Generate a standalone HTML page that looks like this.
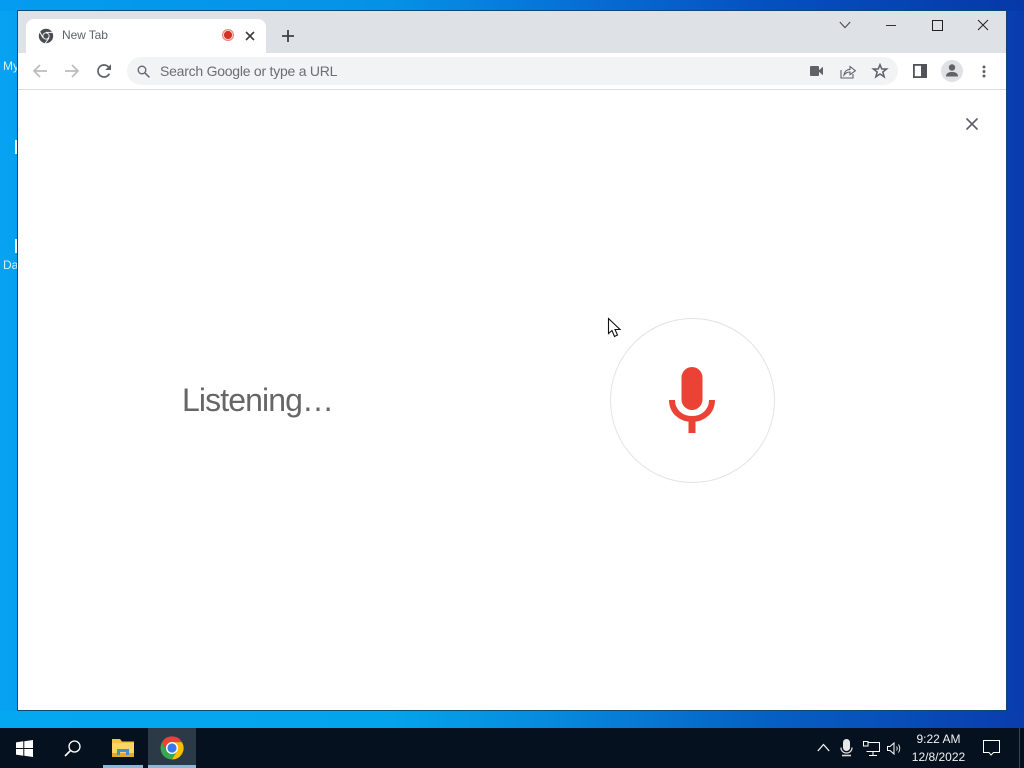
<!DOCTYPE html>
<html><head><meta charset="utf-8"><style>
html,body{margin:0;padding:0;width:1024px;height:768px;overflow:hidden}
body{position:relative;font-family:"Liberation Sans",sans-serif;background:linear-gradient(90deg,#07a2f2 0%,#06a0f0 2%,#0a40b2 98%,#083cae 100%)}
.a{position:absolute}
svg{position:absolute;overflow:visible}
</style></head><body>
<div class="a" style="left:0;top:0;width:1024px;height:11px;background:linear-gradient(90deg,#049cf0 0%,#0592e6 38%,#0670d6 56%,#0550c0 75%,#0638a8 100%)"></div>
<div class="a" style="left:0;top:711px;width:1024px;height:17px;background:linear-gradient(90deg,#04a8f0 0%,#04a4ec 38%,#0688dc 55%,#0560c4 75%,#0a3cae 100%)"></div>
<div class="a" style="left:3px;top:59px;font-size:12px;color:#d8f0ff">My</div>
<div class="a" style="left:3px;top:258px;font-size:12px;color:#d8f0ff">Da</div>
<div class="a" style="left:15px;top:140px;width:3px;height:14px;background:#e8f4ff"></div>
<div class="a" style="left:15px;top:239px;width:3px;height:14px;background:#e8f4ff"></div>

<div class="a" style="left:17px;top:10px;width:990px;height:701px;background:#fff;box-sizing:border-box;border:1px solid #0b4a78;border-right-color:#10417f"></div>
<div class="a" style="left:18px;top:11px;width:988px;height:42px;background:#dee1e6"></div>
<div class="a" style="left:26px;top:19px;width:240px;height:34px;background:#fff;border-radius:8px 8px 0 0"></div>
<div class="a" style="left:18px;top:89px;width:988px;height:1px;background:#dadce0"></div>

<!-- Chrome tab icon -->
<svg style="left:38px;top:28px" width="16" height="16" viewBox="0 0 16 16"><circle cx="8" cy="8" r="7.2" fill="#4a4d51"/><circle cx="8" cy="8" r="3.6" fill="#fff"/><circle cx="8" cy="8" r="2.7" fill="#4a4d51"/><path d="M8 4.4H15M5 9.8L1.6 3.6M10.9 10L7.2 15.4" stroke="#fff" stroke-width="1"/></svg>
<div class="a" style="left:62px;top:28px;font-size:12px;line-height:15px;color:#5f6368;letter-spacing:-.1px">New Tab</div>
<svg style="left:222px;top:29px" width="12" height="12" viewBox="0 0 12 12"><circle cx="6" cy="6" r="6" fill="#e8837a"/><circle cx="6" cy="6" r="4.900" fill="#fbe4e2"/><circle cx="6" cy="6" r="4.100" fill="#d93025"/></svg>
<svg style="left:245px;top:31px" width="10" height="10"><path d="M1 1L9 9M9 1L1 9" stroke="#3c4043" stroke-width="1.600"/></svg>
<svg style="left:281px;top:29px" width="14" height="14"><path d="M7 1V13M1 7H13" stroke="#3c4043" stroke-width="1.800"/></svg>

<!-- window controls -->
<svg style="left:839px;top:21px" width="12" height="8"><path d="M.8 1L6 6.600 11.200 1" fill="none" stroke="#444" stroke-width="1"/></svg>
<div class="a" style="left:886px;top:25px;width:10px;height:1px;background:#333"></div>
<div class="a" style="left:932px;top:20px;width:9px;height:9px;border:1px solid #222"></div>
<svg style="left:977px;top:19px" width="12" height="12"><path d="M1 1L11 11M11 1L1 11" stroke="#222" stroke-width="1"/></svg>

<!-- toolbar -->
<svg style="left:32px;top:63px" width="16" height="16"><path d="M15 8H2M8 2L2 8l6 6" fill="none" stroke="#babcbe" stroke-width="1.700"/></svg>
<svg style="left:64px;top:63px" width="16" height="16"><path d="M1 8H14M8 2l6 6-6 6" fill="none" stroke="#babcbe" stroke-width="1.700"/></svg>
<svg style="left:96px;top:63px" width="16" height="16" viewBox="0 0 16 16"><path d="M13.400 10.600A6 6 0 1 1 12.400 3.900L14 5.600" fill="none" stroke="#5f6368" stroke-width="1.700"/><path d="M15 1.200V7H9.200Z" fill="#5f6368"/></svg>
<div class="a" style="left:127px;top:57px;width:771px;height:28px;border-radius:14px;background:#f1f3f4"></div>
<svg style="left:137px;top:65px" width="13" height="13"><circle cx="5" cy="5" r="3.800" fill="none" stroke="#5f6368" stroke-width="1.300"/><path d="M8 8L12.400 12.400" stroke="#5f6368" stroke-width="1.500"/></svg>
<div class="a" style="left:160px;top:63px;font-size:14px;line-height:16px;color:#6a6d71;white-space:nowrap;letter-spacing:-.24px">Search Google or type a URL</div>
<svg style="left:810px;top:66px" width="13" height="10"><rect x="0" y="0" width="9" height="10" rx="1" fill="#5f6368"/><path d="M8 5L13 .8V9.200Z" fill="#5f6368"/></svg>
<svg style="left:840px;top:63px" width="16" height="16" viewBox="0 0 16 16"><path d="M1 7V15H13V11" fill="none" stroke="#5f6368" stroke-width="1.100"/><path d="M4 12C4.500 8.500 7 6.500 10 6.300V3.500L15.400 7.700 10 11.700V9C8 9 5.700 9.800 4 12Z" fill="none" stroke="#5f6368" stroke-width="1.100"/></svg>
<svg style="left:872px;top:63px" width="16" height="16" viewBox="0 0 16 16"><path d="M8 1.700L9.800 6H14.600L10.800 9 12.200 13.800 8 11 3.800 13.800 5.200 9 1.400 6H6.200Z" fill="none" stroke="#5f6368" stroke-width="1.500"/></svg>
<svg style="left:913px;top:64px" width="14" height="14"><rect x=".9" y=".9" width="12.200" height="12.200" fill="none" stroke="#505458" stroke-width="1.800"/><rect x="8" y="1" width="5" height="12" fill="#505458"/></svg>
<div class="a" style="left:941px;top:60px;width:22px;height:22px;border-radius:50%;background:#dfe1e5"></div>
<svg style="left:945px;top:64px" width="14" height="13"><circle cx="7" cy="3.500" r="3.200" fill="#5f6368"/><path d="M1 12.500C1 8.800 4 8 7 8s6 .8 6 4.500Z" fill="#5f6368"/></svg>
<svg style="left:982px;top:65px" width="4" height="14"><circle cx="2" cy="2" r="1.500" fill="#5f6368"/><circle cx="2" cy="6.500" r="1.500" fill="#5f6368"/><circle cx="2" cy="11" r="1.500" fill="#5f6368"/></svg>

<!-- page -->
<svg style="left:965px;top:117px" width="14" height="14"><path d="M1.500 1.500L12.500 12.500M12.500 1.500L1.500 12.500" stroke="#5f6368" stroke-width="1.700"/></svg>
<div class="a" style="left:182px;top:381px;font-size:32px;line-height:38px;color:#666;white-space:nowrap;letter-spacing:-.9px">Listening…</div>
<div class="a" style="left:610px;top:318px;width:165px;height:165px;box-sizing:border-box;border-radius:50%;background:#fff;border:1px solid #e3e3e3"></div>
<svg style="left:668px;top:366px" width="48" height="68" viewBox="0 0 48 68"><rect x="13.500" y="1" width="21" height="43" rx="10.500" fill="#ea4335"/><path d="M4 34C4 45 12.500 53 24 53S44 45 44 34" fill="none" stroke="#ea4335" stroke-width="6"/><rect x="20.500" y="52" width="7" height="15" fill="#ea4335"/></svg>
<svg style="left:607px;top:317px" width="16" height="22" viewBox="0 0 16 22"><path d="M1.500 1.500V16.500L5 13.500 7.500 19.500 10.500 18 8 12.500H13Z" fill="#fff" stroke="#111" stroke-width="1.100"/></svg>

<!-- taskbar -->
<div class="a" style="left:0;top:728px;width:1024px;height:40px;background:#05111e"></div>
<svg style="left:16px;top:740px" width="17" height="17"><path d="M0 2.400L7.300 1.300V8H0ZM8.300 1.200L17 0V8H8.300ZM0 9H7.300V15.700L0 14.600ZM8.300 9H17V17L8.300 15.800Z" fill="#fff"/></svg>
<svg style="left:64px;top:740px" width="17" height="17"><circle cx="10.500" cy="6.500" r="5.500" fill="none" stroke="#fff" stroke-width="1.300"/><path d="M6.500 10.500L1 16" stroke="#fff" stroke-width="1.600"/></svg>
<div class="a" style="left:103px;top:765px;width:40px;height:3px;background:#8ab8dc"></div>
<svg style="left:112px;top:739px" width="22" height="18" viewBox="0 0 22 18"><path d="M0 0H8L10 2.500H22V18H0Z" fill="#f5c342"/><rect x="0" y="4" width="22" height="14" fill="#fbd568"/><rect x="0" y="14" width="22" height="4" fill="#e2a92e"/><path d="M5 16V10H17V16H14V13H8V16Z" fill="#4c8fc4"/></svg>
<div class="a" style="left:148px;top:728px;width:48px;height:40px;background:#2b3a46"></div>
<div class="a" style="left:148px;top:765px;width:48px;height:3px;background:#8ab8dc"></div>
<svg style="left:160px;top:736px" width="24" height="24" viewBox="0 0 24 24"><circle cx="12" cy="12" r="11.500" fill="#34a853"/><path d="M2 6.200A11.500 11.500 0 0 1 22 6.200H12A6 6 0 0 0 6.800 15Z" fill="#ea4335"/><path d="M22 6.200A11.500 11.500 0 0 1 12 23.500L17.200 15A6 6 0 0 0 12 6.200Z" fill="#fbbc04"/><circle cx="12" cy="12" r="6" fill="#fff"/><circle cx="12" cy="12" r="4.600" fill="#3b78e7"/></svg>

<svg style="left:817px;top:743px" width="13" height="9"><path d="M.8 8L6.500 1.500 12.200 8" fill="none" stroke="#fff" stroke-width="1.200"/></svg>
<svg style="left:840px;top:739px" width="13" height="18"><rect x="3" y="0" width="7" height="12" rx="3.400" fill="#e8e8e8"/><path d="M1 8.500C1 12 3.500 14 6.500 14S12 12 12 8.500" fill="none" stroke="#ddd" stroke-width="1.300"/><path d="M2 16.500H11" stroke="#ddd" stroke-width="1.600"/></svg>
<svg style="left:863px;top:741px" width="17" height="15"><path d="M3.500 1.500H16.500V10.500H3.500M10 10.500V14.500M6 14.500H14" fill="none" stroke="#fff" stroke-width="1"/><rect x=".5" y=".5" width="4.500" height="4.500" fill="#05111e" stroke="#fff"/></svg>
<svg style="left:887px;top:742px" width="15" height="13"><path d="M.5 4.500H3L7 1V12L3 8.500H.5Z" fill="none" stroke="#fff" stroke-width="1"/><path d="M9.500 4.500Q11 6.500 9.500 8.500M11.500 2.500Q14 6.500 11.500 10.500" fill="none" stroke="#ddd" stroke-width="1"/></svg>
<div class="a" style="left:905px;top:730px;width:67px;text-align:center;font-size:12px;line-height:18px;color:#f2f2f2;white-space:nowrap">9:22 AM<br>12/8/2022</div>
<svg style="left:983px;top:740px" width="17" height="16"><path d="M.5 .5H16.500V12.500H10.500L8 15 6 12.500H.5Z" fill="none" stroke="#fff" stroke-width="1"/></svg>
<div class="a" style="left:1019px;top:728px;width:1px;height:40px;background:#3a4650"></div>
</body></html>
